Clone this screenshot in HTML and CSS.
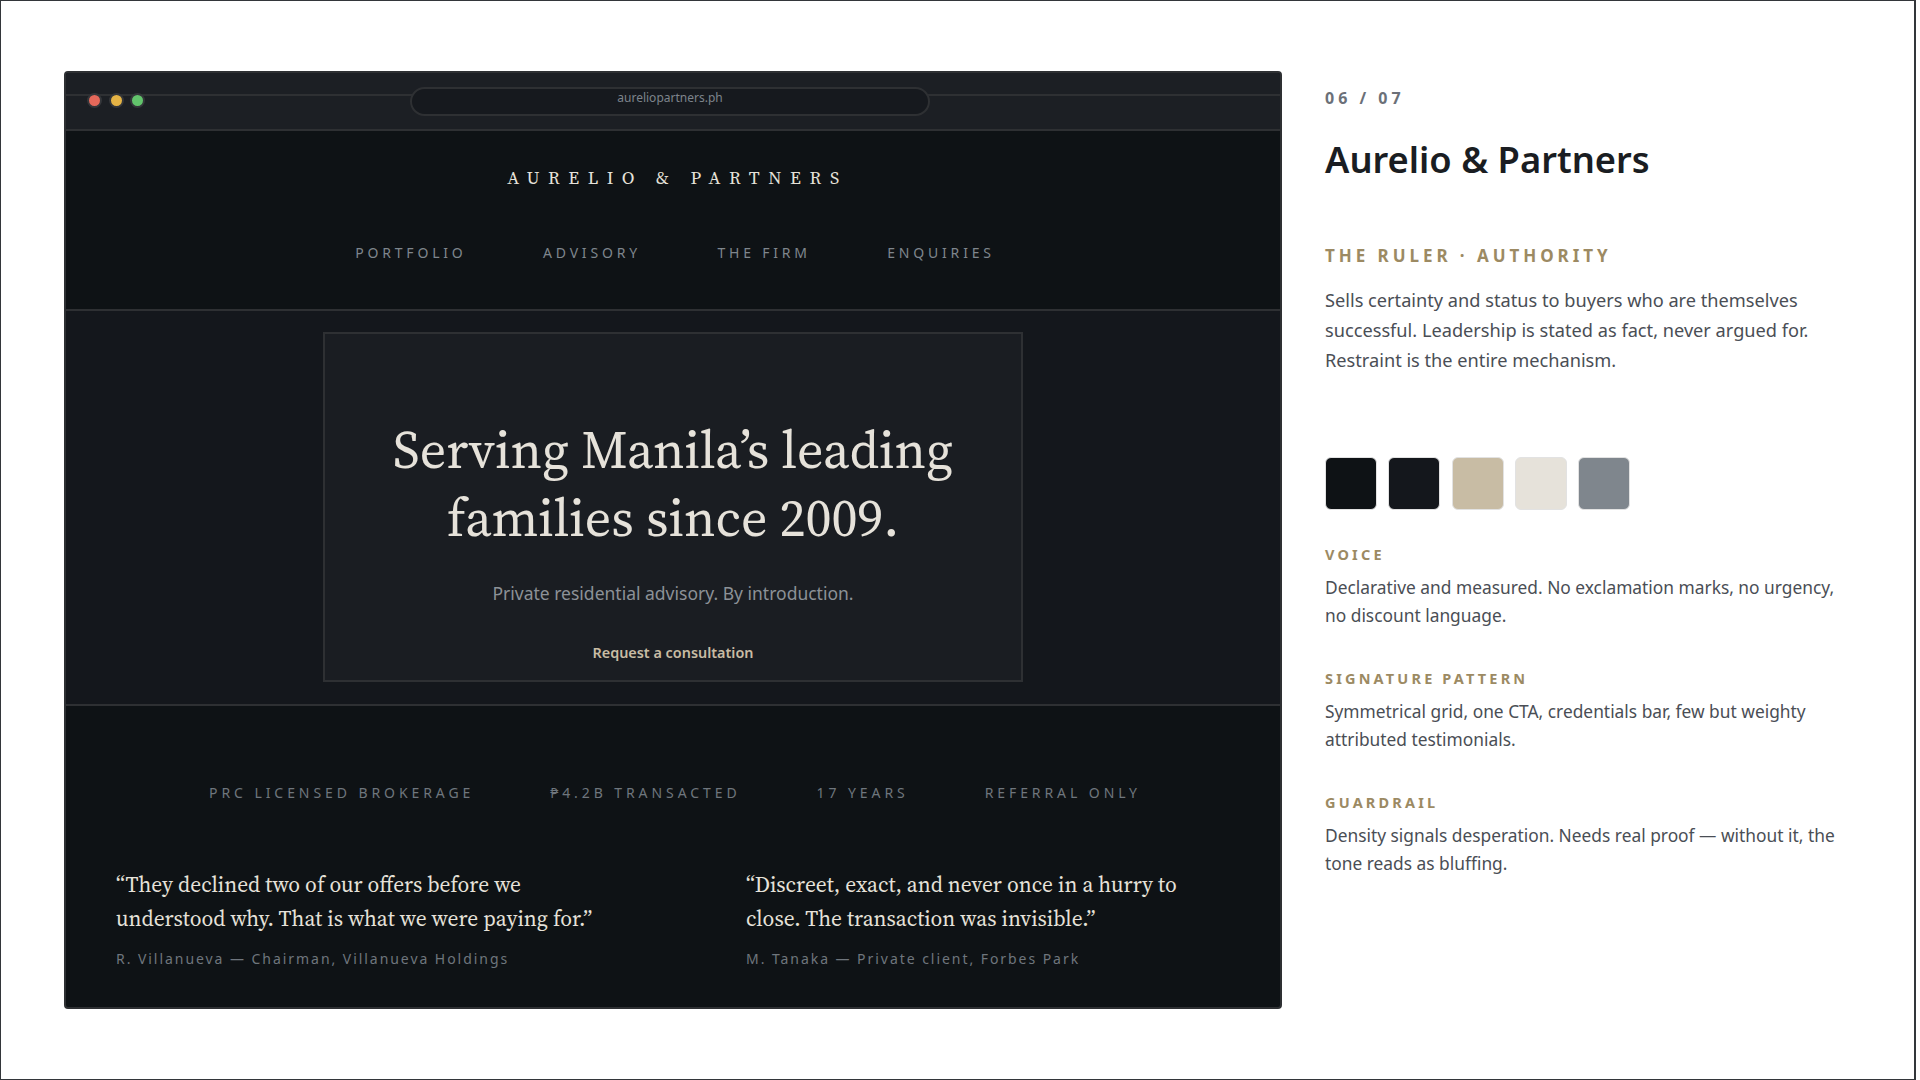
FILE: index.html
```html
<!DOCTYPE html>
<html lang="en">
<head>
<meta charset="utf-8">
<title>Aurelio &amp; Partners</title>
<link rel="stylesheet" href="styles.css">
</head>
<body>
<main class="slide">
  <section class="browser">
    <div class="chrome">
      <div class="dots"><span class="dot red"></span><span class="dot amber"></span><span class="dot green"></span></div>
      <div class="url">aureliopartners.ph</div>
    </div>
    <header class="site-head">
      <div class="logo">AURELIO &amp; PARTNERS</div>
      <nav class="nav"><span>PORTFOLIO</span><span>ADVISORY</span><span>THE FIRM</span><span>ENQUIRIES</span></nav>
    </header>
    <div class="hero">
      <div class="hero-card">
        <h2>Serving Manila’s leading<br>families since 2009.</h2>
        <p class="sub">Private residential advisory. By introduction.</p>
        <a class="cta">Request a consultation</a>
      </div>
    </div>
    <div class="lower">
      <div class="creds"><span>PRC LICENSED BROKERAGE</span><span>₱4.2B TRANSACTED</span><span>17 YEARS</span><span>REFERRAL ONLY</span></div>
      <div class="quotes">
        <figure><blockquote>“They declined two of our offers before we understood why. That is what we were paying for.”</blockquote><figcaption>R. Villanueva — Chairman, Villanueva Holdings</figcaption></figure>
        <figure><blockquote>“Discreet, exact, and never once in a hurry to close. The transaction was invisible.”</blockquote><figcaption>M. Tanaka — Private client, Forbes Park</figcaption></figure>
      </div>
    </div>
  </section>
  <aside class="notes">
    <div class="count">06 / 07</div>
    <h1>Aurelio &amp; Partners</h1>
    <div class="arch">THE RULER · AUTHORITY</div>
    <p class="lead">Sells certainty and status to buyers who are themselves successful. Leadership is stated as fact, never argued for. Restraint is the entire mechanism.</p>
    <div class="swatches"><i class="s1"></i><i class="s2"></i><i class="s3"></i><i class="s4"></i><i class="s5"></i></div>
    <h3>VOICE</h3>
    <p>Declarative and measured. No exclamation marks, no urgency, no discount language.</p>
    <h3>SIGNATURE PATTERN</h3>
    <p>Symmetrical grid, one CTA, credentials bar, few but weighty attributed testimonials.</p>
    <h3>GUARDRAIL</h3>
    <p>Density signals desperation. Needs real proof — without it, the tone reads as bluffing.</p>
  </aside>
</main>
</body>
</html>
```
FILE: styles.css
```css
* { box-sizing: border-box; margin: 0; padding: 0; }
html, body { width: 1920px; height: 1080px; overflow: hidden; background: #fff; }
body { font-family: "Noto Sans", "Open Sans", sans-serif; }
.slide { width: 1916px; height: 1080px; border: 1px solid #33363a; border-right-width: 2px; display: flex; padding: 70px 0 0 63px; gap: 43px; background: #fff; }
.browser { width: 1218px; height: 938px; border: 2px solid #2e3033; border-radius: 4px; background: #0e1215; overflow: hidden; display: flex; flex-direction: column; flex: none; }
.chrome { height: 58px; background: #1c1f24; border-bottom: 2px solid #2e3033; position: relative; flex: none; display: flex; padding: 14px 0 0 344px; }
.chrome::before { content: ""; position: absolute; left: 0; right: 0; top: 21px; height: 2px; background: #2e3033; }
.dots { position: absolute; left: 21px; top: 20px; display: flex; gap: 6.5px; }
.dot { width: 15px; height: 15px; border-radius: 50%; border: 2px solid #34363a; }
.red { background: #e5685a; } .amber { background: #e5b345; } .green { background: #62c46c; }
.url { position: relative; width: 520px; height: 29px; border: 2px solid #2e3033; border-radius: 15px; background: #16191e; color: #7d848c; font-size: 12px; line-height: 18px; text-align: center; }
.site-head { height: 180px; border-bottom: 2px solid #2e3033; flex: none; display: flex; flex-direction: column; align-items: center; padding-top: 33px; }
.logo { font-family: "Source Serif 4", "Source Serif Pro", "Liberation Serif", serif; color: #e6e2da; font-size: 18px; letter-spacing: 8.65px; line-height: 28px; margin-left: 9px; }
.nav { display: flex; gap: 76.5px; margin-top: 51px; margin-left: 4px; color: #7f868d; font-size: 14px; letter-spacing: 3.8px; line-height: 20px; }
.hero { height: 395px; background: #14171c; border-bottom: 2px solid #2e3033; flex: none; padding-top: 21px; display: flex; justify-content: center; }
.hero-card { width: 700px; height: 350px; border: 2px solid #2e3033; background: #1a1d22; text-align: center; padding-top: 82px; }
.hero-card h2 { font-family: "Source Serif 4", "Source Serif Pro", "Liberation Serif", serif; font-weight: 400; font-size: 52px; line-height: 68px; color: #e6e2da; }
.sub { margin-top: 26px; color: #8c9197; font-size: 17.5px; line-height: 30px; }
.cta { display: block; margin-top: 33px; color: #c8bca4; font-weight: 600; font-size: 14.4px; line-height: 24px; }
.lower { flex: 1; padding: 76px 52px 0 50px; }
.creds { display: flex; justify-content: center; gap: 76px; padding-left: 6px; color: #6f767d; font-size: 14px; letter-spacing: 0.28em; line-height: 22px; }
.quotes { display: grid; grid-template-columns: 481px 481px; gap: 149px; margin-top: 64px; }
blockquote { font-family: "Source Serif 4", "Source Serif Pro", "Liberation Serif", serif; color: #e6e2da; font-size: 21.45px; line-height: 34px; }
figcaption { color: #6f767d; font-size: 14px; letter-spacing: 1.95px; line-height: 20px; margin-top: 13px; }
.notes { width: 525px; flex: none; padding-top: 16px; color: #4a4e55; }
.count { font-size: 16px; font-weight: 700; letter-spacing: 4px; color: #6b7078; line-height: 22px; }
.notes h1 { font-size: 36.3px; font-weight: 600; color: #1a1d22; line-height: 50px; margin-top: 25px; }
.arch { margin-top: 60px; font-size: 17px; font-weight: 700; letter-spacing: 3.95px; color: #9c8a63; line-height: 24px; }
.lead { font-size: 18.2px; line-height: 30px; margin-top: 17px; }
.swatches { display: flex; gap: 11.25px; margin-top: 82px; margin-bottom: 33px; }
.swatches i { width: 52px; height: 53px; border-radius: 6px; border: 1px solid #e2e2e2; }
.s1 { background: #0e1215; } .s2 { background: #14171c; } .s3 { background: #c8bca4; } .s4 { background: #e6e2da; } .s5 { background: #7f868d; }
.notes h3 { font-size: 14.5px; font-weight: 700; letter-spacing: 3.17px; color: #9c8a63; line-height: 22px; }
.notes p:not(.lead) { font-size: 17.35px; line-height: 28px; margin: 8px 0 38px; }
```
